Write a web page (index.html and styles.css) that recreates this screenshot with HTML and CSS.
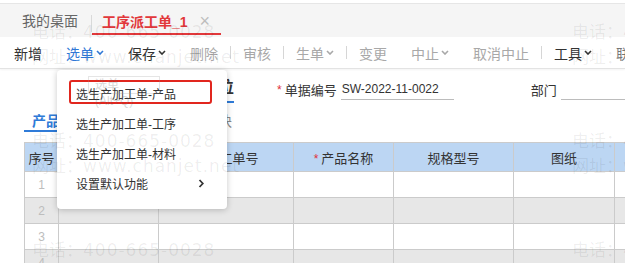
FILE: index.html
```html
<!DOCTYPE html>
<html lang="zh-CN">
<head>
    <meta charset="UTF-8">
    <title>工序派工单</title>
    <link rel="stylesheet" href="styles.css">
</head>
<body>
    <!-- 顶部页签 -->
    <div class="tabbar">
        <span class="tab">我的桌面</span>
        <span class="tab-sep"></span>
        <span class="tab tab-on">工序派工单_1<span class="tab-close">×</span></span>
    </div>

    <!-- 工具栏 -->
    <div class="toolbar">
        <span class="tb">新增</span>
        <span class="tb tb-blue">选单<svg class="arr" viewBox="0 0 8 5"><polyline points="1,1 4,4 7,1"/></svg></span>
        <span class="tb">保存<svg class="arr" viewBox="0 0 8 5"><polyline points="1,1 4,4 7,1"/></svg></span>
        <span class="tb tb-off">删除</span>
        <span class="tb-sep"></span>
        <span class="tb tb-off">审核</span>
        <span class="tb-sep"></span>
        <span class="tb tb-off">生单<svg class="arr" viewBox="0 0 8 5"><polyline points="1,1 4,4 7,1"/></svg></span>
        <span class="tb-sep"></span>
        <span class="tb tb-off">变更</span>
        <span class="tb tb-off">中止<svg class="arr" viewBox="0 0 8 5"><polyline points="1,1 4,4 7,1"/></svg></span>
        <span class="tb tb-off">取消中止</span>
        <span class="tb-sep"></span>
        <span class="tb">工具<svg class="arr" viewBox="0 0 8 5"><polyline points="1,1 4,4 7,1"/></svg></span>
        <span class="tb tb-mid">联查</span>
    </div>

    <!-- 表头 -->
    <div class="head">
        <div class="head-title">单位</div>
        <div class="field field-code">
            <i class="req">*</i>单据编号
            <span class="ipt ipt-code">SW-2022-11-0022</span>
        </div>
        <div class="field field-dept">
            部门
            <span class="ipt ipt-dept"></span>
        </div>
    </div>

    <div class="subtabs">
        <span class="stab stab-on">产品</span>
        <span class="stab">工序</span>
        <span class="stab">附件块</span>
    </div>

    <!-- 表体 -->
    <table class="grid" cellspacing="0">
        <colgroup>
            <col class="c-no">
            <col class="c-w100">
            <col class="c-w135">
            <col class="c-w100">
            <col class="c-w120">
            <col class="c-w101">
            <col class="c-w100">
        </colgroup>
        <tr class="gh">
            <th>序号</th>
            <th>源单类型</th>
            <th>生产工单号</th>
            <th><i class="req">*</i>产品名称</th>
            <th>规格型号</th>
            <th>图纸</th>
            <th>工序</th>
        </tr>
        <tr><td class="no">1</td><td></td><td></td><td></td><td></td><td></td><td></td></tr>
        <tr><td class="no">2</td><td></td><td></td><td></td><td></td><td></td><td></td></tr>
        <tr><td class="no">3</td><td></td><td></td><td></td><td></td><td></td><td></td></tr>
        <tr><td class="no">4</td><td></td><td></td><td></td><td></td><td></td><td></td></tr>
    </table>

    <!-- 选单下拉 -->
    <div class="dropmenu">
        <div class="dm-item dm-hl">选生产加工单-产品</div>
        <div class="dm-item">选生产加工单-工序</div>
        <div class="dm-item">选生产加工单-材料</div>
        <div class="dm-item">设置默认功能<svg class="dm-more" viewBox="0 0 6 9"><polyline points="1.5,1 4.8,4.5 1.5,8"/></svg></div>
    </div>
    <div class="tip">选单 (Alt+Q)</div>

    <!-- 水印 -->
    <div class="watermark">
        <div class="wm"><p>电话：<b>400-665-0028</b></p><p>网址：<b>www.chanjet.net</b></p></div>
        <div class="wm"><p>电话：<b>400-665-0028</b></p><p>网址：<b>www.chanjet.net</b></p></div>
        <div class="wm"><p>电话：<b>400-665-0028</b></p><p>网址：<b>www.chanjet.net</b></p></div>
        <div class="wm"><p>电话：<b>400-665-0028</b></p><p>网址：<b>www.chanjet.net</b></p></div>
        <div class="wm"><p>电话：<b>400-665-0028</b></p><p>网址：<b>www.chanjet.net</b></p></div>
        <div class="wm"><p>电话：<b>400-665-0028</b></p><p>网址：<b>www.chanjet.net</b></p></div>
    </div>
</body>
</html>
```

FILE: styles.css
```css
html, body{
    margin: 0;
    overflow: hidden;
}
body{
    position: relative;
    width: 625px;
    height: 263px;
    background: #fff;
    font-family: "Liberation Sans", "Noto Sans CJK SC", sans-serif;
    color: #333;
}

/* 顶部页签 */
.tabbar{
    display: flex;
    align-items: flex-end;
    height: 33px;
    margin-top: 3px;
    padding-left: 8px;
    border-top: 1px solid #e6e6e6;
    background: #f5f5f5;
    white-space: nowrap;
}
.tab{
    box-sizing: border-box;
    height: 26px;
    line-height: 24px;
    padding: 0 13px 0 14px;
    margin-bottom: 2px;
    border-bottom: 2px solid transparent;
    font-size: 14px;
    color: #666;
}
.tab-sep{
    width: 1px;
    height: 17px;
    margin-bottom: 5px;
    background: #d9d9d9;
}
.tab-on{
    padding: 0 11px 0 10px;
    border-bottom-color: #e2383b;
    color: #e2383b;
    font-weight: bold;
}
.tab-close{
    margin-left: 12px;
    font-size: 18px;
    font-weight: normal;
    color: #bdbdbd;
}

/* 工具栏 */
.toolbar{
    display: flex;
    align-items: center;
    height: 31px;
    padding-left: 14px;
    border-bottom: 1px solid #e3e3e3;
    box-shadow: 0 1px 2px rgba(0,0,0,.05);
    font-size: 14px;
    white-space: nowrap;
}
.tb{
    display: flex;
    align-items: center;
    margin-right: 24px;
    color: #333;
}
.tb-blue{
    color: #2f78d6;
}
.tb-off{
    color: #a8a8a8;
}
.tb-mid{
    color: #777;
}
.tb-sep{
    flex: none;
    width: 1px;
    height: 13px;
    margin: 0 12px 0 -12px;
    background: #d6d6d6;
}
.arr{
    width: 8px;
    height: 5px;
    margin-left: 2px;
    fill: none;
    stroke: currentColor;
    stroke-width: 1.6;
}

/* 表头 */
.head{
    display: flex;
    align-items: flex-end;
    padding: 9px 0 0 202px;
    white-space: nowrap;
}
.head-title{
    line-height: 20px;
    padding-bottom: 3px;
    border-bottom: 2px solid #2f7bd8;
    font-size: 16px;
    font-weight: bold;
    color: #333;
}
.field{
    display: flex;
    align-items: center;
    height: 21px;
    margin-bottom: 3px;
    font-size: 13px;
    color: #333;
}
.field-code{
    margin-left: 43px;
}
.field-dept{
    margin-left: 77px;
}
.req{
    font-style: normal;
    color: #e0303a;
    margin-right: 3px;
    font-size: 12px;
}
.ipt{
    box-sizing: border-box;
    height: 21px;
    line-height: 20px;
    margin-left: 4px;
    padding-left: 1px;
    border-bottom: 1px solid #bcbcbc;
    font-size: 12px;
    color: #333;
}
.ipt-code{
    width: 113px;
}
.ipt-dept{
    width: 100px;
}

.subtabs{
    display: flex;
    gap: 35px;
    margin: 9px 0 0 24px;
}
.stab{
    padding: 0 8px;
    line-height: 18px;
    border-bottom: 2px solid transparent;
    font-size: 14px;
    color: #888;
}
.stab-on{
    border-bottom-color: #2f7bd8;
    color: #2f7bd8;
    font-weight: bold;
}

/* 表体 */
.grid{
    margin: 10px 0 0 24px;
    width: 690px;
    table-layout: fixed;
    border-collapse: collapse;
    font-size: 13px;
}
.c-no{ width: 34px; }
.c-w100{ width: 100px; }
.c-w135{ width: 135px; }
.c-w120{ width: 120px; }
.c-w101{ width: 101px; }
.grid th, .grid td{
    border: 1px solid #cbcbcb;
    padding: 0;
    text-align: center;
    white-space: nowrap;
    overflow: hidden;
}
.gh th{
    height: 28px;
    background: #bcd6f3;
    font-weight: normal;
    color: #333;
}
.grid td{
    height: 25px;
}
.grid tr:nth-child(odd) td{
    background: #e7e7e7;
}
.no{
    font-size: 12px;
    color: #bdbdbd;
}

/* 选单下拉 */
.dropmenu{
    position: absolute;
    left: 57px;
    top: 70px;
    width: 170px;
    padding: 8px 0 11px;
    background: #fff;
    border-radius: 4px;
    box-shadow: 0 1px 6px rgba(0,0,0,.22);
}
.dm-item{
    position: relative;
    display: flex;
    align-items: center;
    justify-content: space-between;
    height: 30px;
    padding: 0 19px;
    font-size: 12px;
    color: #333;
}
.dm-hl::after{
    content: "";
    position: absolute;
    left: 12px;
    right: 15px;
    top: 2px;
    bottom: 4px;
    border: 2px solid #e1261e;
    border-radius: 3px;
}
.dm-more{
    width: 6px;
    height: 9px;
    margin-right: 4px;
    fill: none;
    stroke: #333;
    stroke-width: 1.8;
}
.tip{
    position: absolute;
    left: 88px;
    top: 76px;
    width: 64px;
    height: 16px;
    padding-left: 6px;
    line-height: 16px;
    border: 1px solid #999;
    font-size: 12px;
    color: #666;
    opacity: .25;
}

/* 水印 */
.watermark{
    position: absolute;
    top: 0;
    left: 0;
    right: 0;
    bottom: 0;
    display: grid;
    grid-template-columns: 540px 300px;
    grid-auto-rows: 109px;
    padding: 20px 0 0 32px;
    pointer-events: none;
    font-family: "DejaVu Sans", "Noto Sans CJK SC", sans-serif;
    font-size: 17px;
    color: rgba(0,0,0,.07);
    white-space: nowrap;
}
.wm p{
    margin: 0;
    line-height: 25px;
}
.wm b{
    font-weight: normal;
    letter-spacing: 1px;
}
```
